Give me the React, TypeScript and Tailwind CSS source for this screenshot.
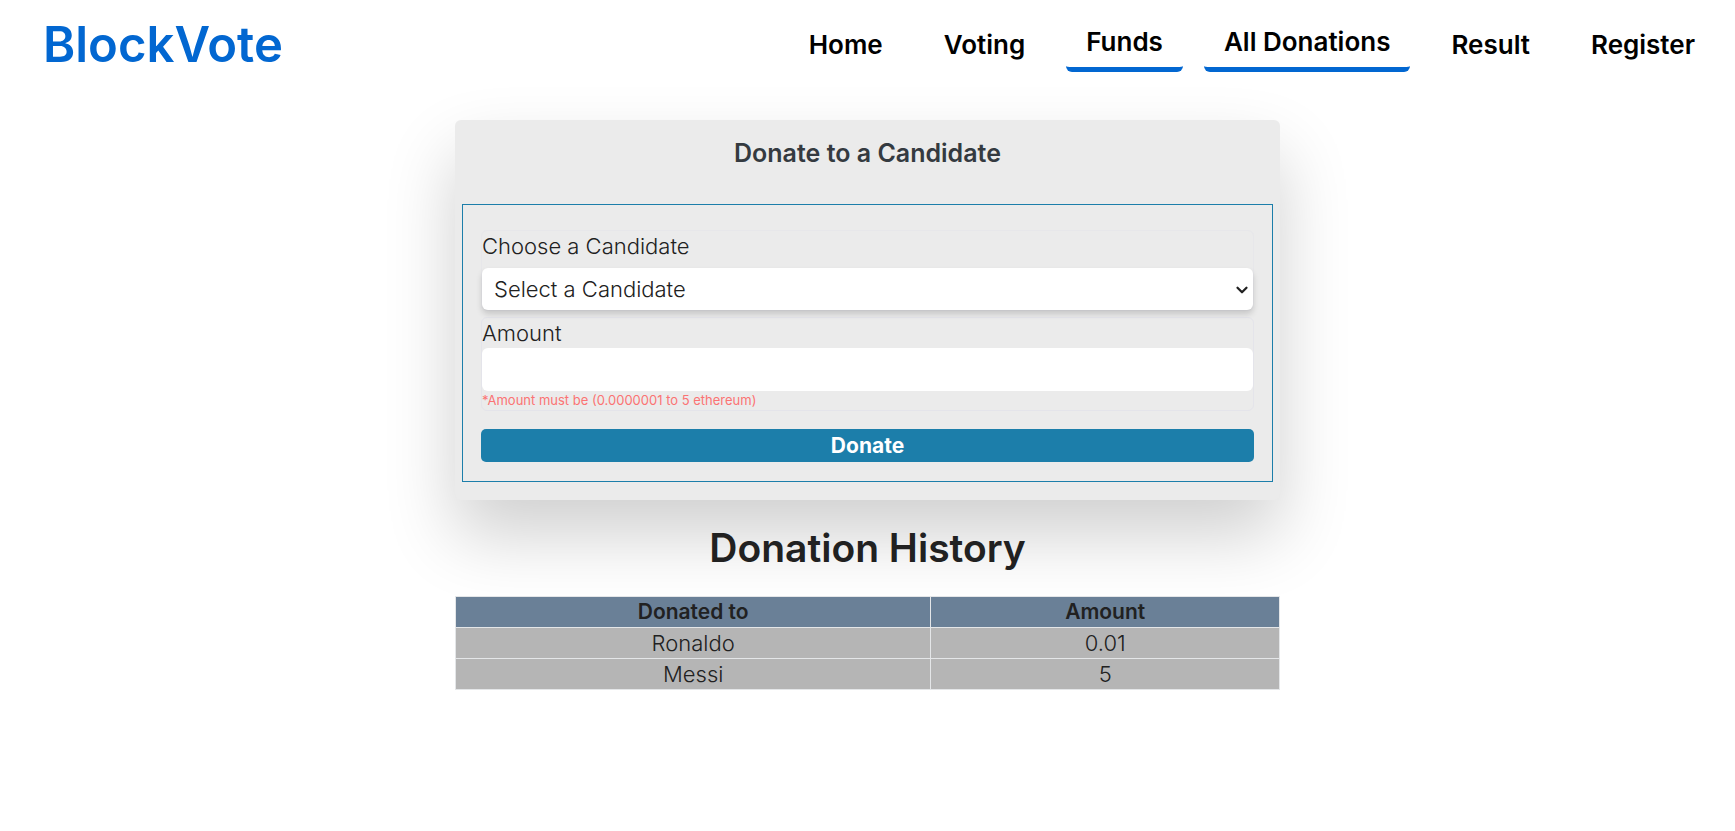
import { useState } from "react";
import { ChevronDown } from "lucide-react";

const links = [
  { label: "Home", active: false },
  { label: "Voting", active: false },
  { label: "Funds", active: true },
  { label: "All Donations", active: true },
  { label: "Result", active: false },
  { label: "Register", active: false },
];

const donations = [
  { to: "Ronaldo", amount: "0.01" },
  { to: "Messi", amount: "5" },
];

function Header() {
  return (
    <header className="flex h-[90px] items-center justify-between pr-5 pl-[43px]">
      <a href="#home" className="text-[49px] leading-[48px] font-semibold text-[#0267d1]">
        BlockVote
      </a>
      <nav className="flex items-center gap-[21px] text-[26px] leading-[40px] font-semibold text-black">
        {links.map((link) => (
          <a
            key={link.label}
            href={"#" + link.label.toLowerCase().replace(" ", "-")}
            className={
              link.active
                ? "rounded-md border-b-[5px] border-[#0267d1] px-5 pt-1 pb-[5px]"
                : "px-5 py-1"
            }
          >
            {link.label}
          </a>
        ))}
      </nav>
    </header>
  );
}

function DonateForm() {
  const [candidate, setCandidate] = useState("");
  return (
    <section className="rounded-md bg-[#ebebeb] px-[7px] pb-[18px] shadow-[0_35px_70px_rgba(0,0,0,0.19)]">
      <h1 className="pt-[15px] pb-[33px] text-center text-[25px] leading-[36px] font-semibold text-[#343a40]">
        Donate to a Candidate
      </h1>
      <form
        className="border border-[#1c7eaa] px-[18px] pt-[25px] pb-[19px]"
        onSubmit={(event) => event.preventDefault()}
      >
        <div className="rounded-md border border-[#e7e7ea]">
          <label htmlFor="candidate" className="block pb-[7px] leading-[30px]">
            Choose a Candidate
          </label>
          <div className="relative">
            <select
              id="candidate"
              value={candidate}
              onChange={(event) => setCandidate(event.target.value)}
              className="block h-[42px] w-full appearance-none rounded-md bg-white px-3 shadow-[0_4px_6px_rgba(0,0,0,0.16)]"
            >
              <option value="">Select a Candidate</option>
              {donations.map((donation) => (
                <option key={donation.to}>{donation.to}</option>
              ))}
            </select>
            <ChevronDown
              className="pointer-events-none absolute top-[13px] right-[2px] size-[18px]"
              strokeWidth={3}
            />
          </div>
        </div>
        <div className="mt-[6px] rounded-md border border-[#e4e4ea]">
          <label htmlFor="amount" className="block leading-[30px]">
            Amount
          </label>
          <input
            id="amount"
            type="text"
            inputMode="decimal"
            className="block h-[43px] w-full rounded-md bg-white px-3"
          />
          <p className="pb-px text-[13px] leading-[18px] font-normal text-[#fb7373]">
            *Amount must be (0.0000001 to 5 ethereum)
          </p>
        </div>
        <button
          type="submit"
          className="mt-[18px] block h-[33px] w-full rounded-[5px] bg-[#1c7eaa] text-[21px] font-bold text-white"
        >
          Donate
        </button>
      </form>
    </section>
  );
}

function History() {
  return (
    <section className="relative text-center">
      <h2 className="py-[20px] text-[39px] leading-[56px] font-semibold">
        Donation History
      </h2>
      <table className="w-full border-collapse leading-[30px]">
        <thead className="bg-[#6a8097] text-[21px]">
          <tr>
            <th className="w-15/26 border border-[#e4e6e8] font-semibold">
              Donated to
            </th>
            <th className="border border-[#e4e6e8] font-semibold">Amount</th>
          </tr>
        </thead>
        <tbody className="bg-[#b5b5b5]">
          {donations.map((donation) => (
            <tr key={donation.to}>
              <td className="border border-[#e4e6e8]">{donation.to}</td>
              <td className="border border-[#e4e6e8]">{donation.amount}</td>
            </tr>
          ))}
        </tbody>
      </table>
    </section>
  );
}

export default function App() {
  return (
    <div className="min-h-screen bg-white font-['Inter',sans-serif] text-[22px] font-light text-[#212121]">
      <Header />
      <main className="mx-auto mt-[30px] w-full max-w-[825px]">
        <DonateForm />
        <History />
      </main>
    </div>
  );
}
